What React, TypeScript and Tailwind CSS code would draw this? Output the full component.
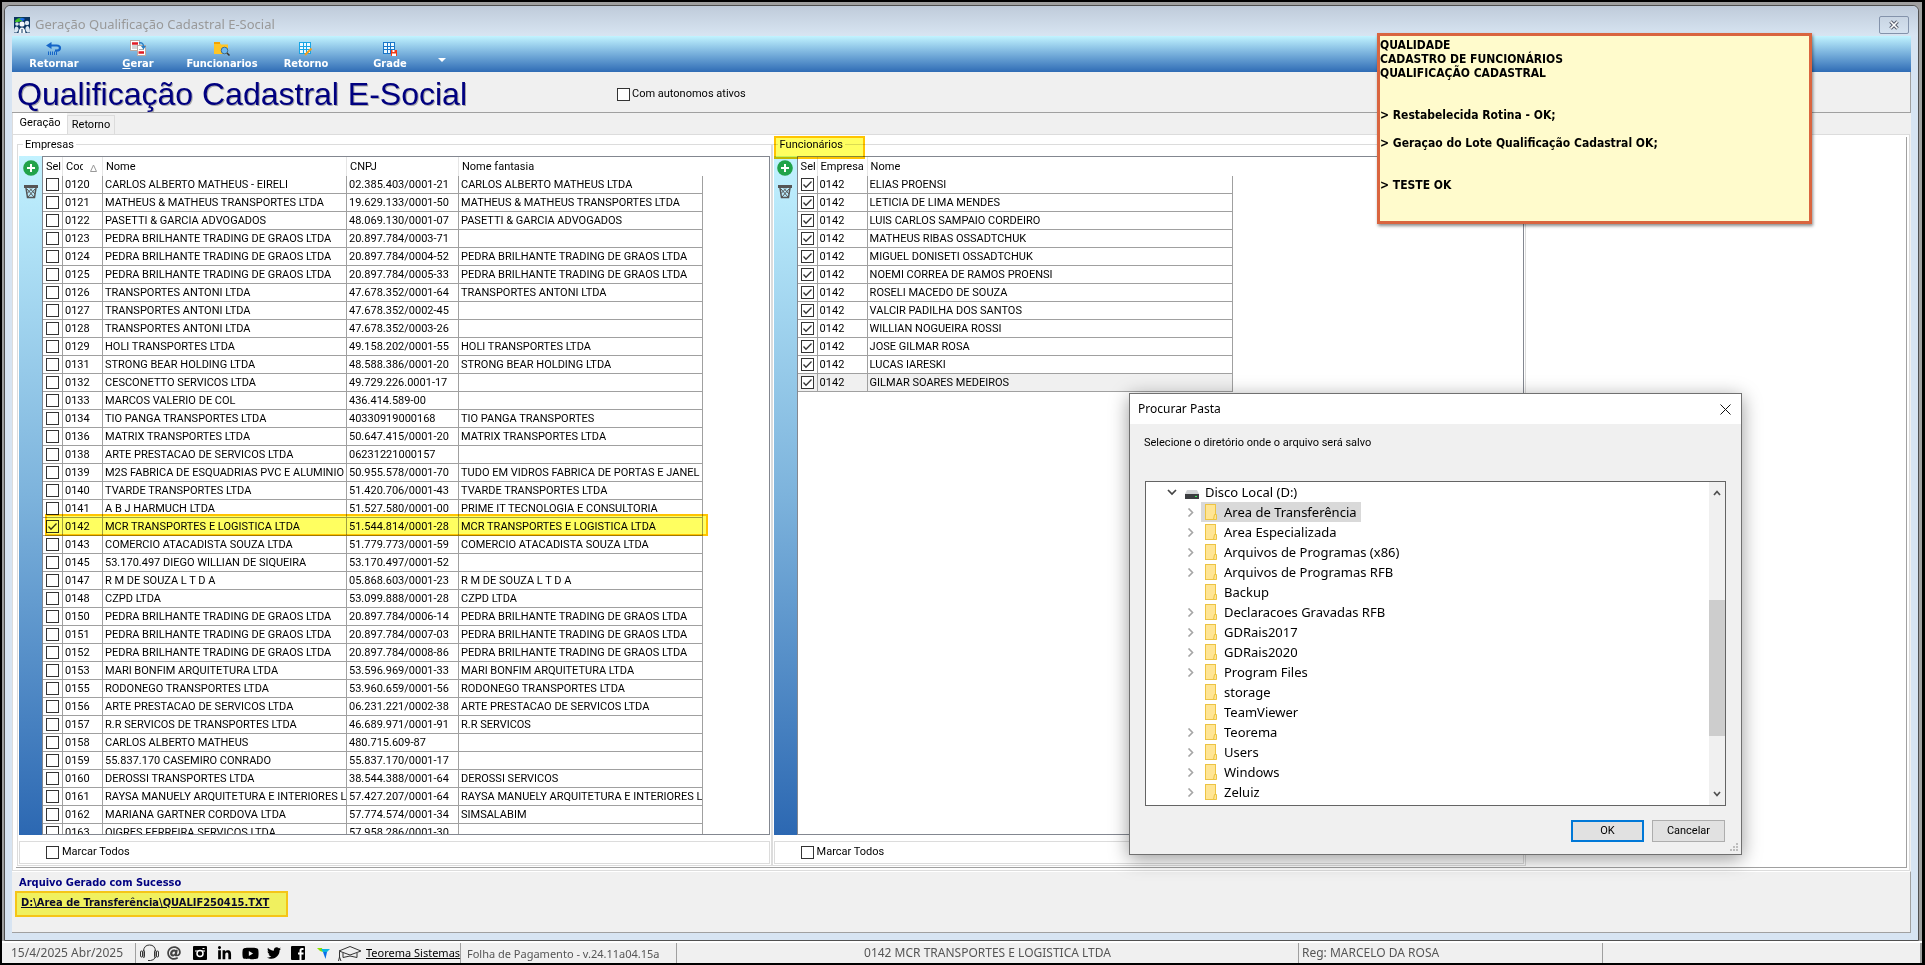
import React, { useState } from 'react';
import { FaAt, FaLinkedinIn, FaTwitter, FaYoutube } from 'react-icons/fa';

const empresas: [string, string, string, string][] = [
    ['0120', 'CARLOS ALBERTO MATHEUS - EIRELI', '02.385.403/0001-21', 'CARLOS ALBERTO MATHEUS LTDA'],
    ['0121', 'MATHEUS & MATHEUS TRANSPORTES LTDA', '19.629.133/0001-50', 'MATHEUS & MATHEUS TRANSPORTES LTDA'],
    ['0122', 'PASETTI & GARCIA ADVOGADOS', '48.069.130/0001-07', 'PASETTI & GARCIA ADVOGADOS'],
    ['0123', 'PEDRA BRILHANTE TRADING DE GRAOS LTDA', '20.897.784/0003-71', ''],
    ['0124', 'PEDRA BRILHANTE TRADING DE GRAOS LTDA', '20.897.784/0004-52', 'PEDRA BRILHANTE TRADING DE GRAOS LTDA'],
    ['0125', 'PEDRA BRILHANTE TRADING DE GRAOS LTDA', '20.897.784/0005-33', 'PEDRA BRILHANTE TRADING DE GRAOS LTDA'],
    ['0126', 'TRANSPORTES ANTONI LTDA', '47.678.352/0001-64', 'TRANSPORTES ANTONI LTDA'],
    ['0127', 'TRANSPORTES ANTONI LTDA', '47.678.352/0002-45', ''],
    ['0128', 'TRANSPORTES ANTONI LTDA', '47.678.352/0003-26', ''],
    ['0129', 'HOLI TRANSPORTES LTDA', '49.158.202/0001-55', 'HOLI TRANSPORTES LTDA'],
    ['0131', 'STRONG BEAR HOLDING LTDA', '48.588.386/0001-20', 'STRONG BEAR HOLDING LTDA'],
    ['0132', 'CESCONETTO SERVICOS LTDA', '49.729.226.0001-17', ''],
    ['0133', 'MARCOS VALERIO DE COL', '436.414.589-00', ''],
    ['0134', 'TIO PANGA TRANSPORTES LTDA', '40330919000168', 'TIO PANGA TRANSPORTES'],
    ['0136', 'MATRIX TRANSPORTES LTDA', '50.647.415/0001-20', 'MATRIX TRANSPORTES LTDA'],
    ['0138', 'ARTE PRESTACAO DE SERVICOS LTDA', '06231221000157', ''],
    ['0139', 'M2S FABRICA DE ESQUADRIAS PVC E ALUMINIO', '50.955.578/0001-70', 'TUDO EM VIDROS FABRICA DE PORTAS E JANEL'],
    ['0140', 'TVARDE TRANSPORTES LTDA', '51.420.706/0001-43', 'TVARDE TRANSPORTES LTDA'],
    ['0141', 'A B J HARMUCH LTDA', '51.527.580/0001-00', 'PRIME IT TECNOLOGIA E CONSULTORIA'],
    ['0142', 'MCR TRANSPORTES E LOGISTICA LTDA', '51.544.814/0001-28', 'MCR TRANSPORTES E LOGISTICA LTDA'],
    ['0143', 'COMERCIO ATACADISTA SOUZA LTDA', '51.779.773/0001-59', 'COMERCIO ATACADISTA SOUZA LTDA'],
    ['0145', '53.170.497 DIEGO WILLIAN DE SIQUEIRA', '53.170.497/0001-52', ''],
    ['0147', 'R M DE SOUZA L T D A', '05.868.603/0001-23', 'R M DE SOUZA L T D A'],
    ['0148', 'CZPD LTDA', '53.099.888/0001-28', 'CZPD LTDA'],
    ['0150', 'PEDRA BRILHANTE TRADING DE GRAOS LTDA', '20.897.784/0006-14', 'PEDRA BRILHANTE TRADING DE GRAOS LTDA'],
    ['0151', 'PEDRA BRILHANTE TRADING DE GRAOS LTDA', '20.897.784/0007-03', 'PEDRA BRILHANTE TRADING DE GRAOS LTDA'],
    ['0152', 'PEDRA BRILHANTE TRADING DE GRAOS LTDA', '20.897.784/0008-86', 'PEDRA BRILHANTE TRADING DE GRAOS LTDA'],
    ['0153', 'MARI BONFIM ARQUITETURA LTDA', '53.596.969/0001-33', 'MARI BONFIM ARQUITETURA LTDA'],
    ['0155', 'RODONEGO TRANSPORTES LTDA', '53.960.659/0001-56', 'RODONEGO TRANSPORTES LTDA'],
    ['0156', 'ARTE PRESTACAO DE SERVICOS LTDA', '06.231.221/0002-38', 'ARTE PRESTACAO DE SERVICOS LTDA'],
    ['0157', 'R.R SERVICOS DE TRANSPORTES LTDA', '46.689.971/0001-91', 'R.R SERVICOS'],
    ['0158', 'CARLOS ALBERTO MATHEUS', '480.715.609-87', ''],
    ['0159', '55.837.170 CASEMIRO CONRADO', '55.837.170/0001-17', ''],
    ['0160', 'DEROSSI TRANSPORTES LTDA', '38.544.388/0001-64', 'DEROSSI SERVICOS'],
    ['0161', 'RAYSA MANUELY ARQUITETURA E INTERIORES L', '57.427.207/0001-64', 'RAYSA MANUELY ARQUITETURA E INTERIORES L'],
    ['0162', 'MARIANA GARTNER CORDOVA LTDA', '57.774.574/0001-34', 'SIMSALABIM'],
    ['0163', 'OIGRES FERREIRA SERVICOS LTDA', '57.958.286/0001-30', ''],
];

const funcionarios = [
    'ELIAS PROENSI',
    'LETICIA DE LIMA MENDES',
    'LUIS CARLOS SAMPAIO CORDEIRO',
    'MATHEUS RIBAS OSSADTCHUK',
    'MIGUEL DONISETI OSSADTCHUK',
    'NOEMI CORREA DE RAMOS PROENSI',
    'ROSELI MACEDO DE SOUZA',
    'VALCIR PADILHA DOS SANTOS',
    'WILLIAN NOGUEIRA ROSSI',
    'JOSE GILMAR ROSA',
    'LUCAS IARESKI',
    'GILMAR SOARES MEDEIROS',
];

const pastas: [string, boolean][] = [
    ['Area de Transferência', true],
    ['Area Especializada', true],
    ['Arquivos de Programas (x86)', true],
    ['Arquivos de Programas RFB', true],
    ['Backup', false],
    ['Declaracoes Gravadas RFB', true],
    ['GDRais2017', true],
    ['GDRais2020', true],
    ['Program Files', true],
    ['storage', false],
    ['TeamViewer', false],
    ['Teorema', true],
    ['Users', true],
    ['Windows', true],
    ['Zeluiz', true],
];

const bold = 'font-["DejaVu_Sans_Condensed","DejaVu_Sans",sans-serif] font-bold';
const segoe = 'font-["Noto_Sans","Open_Sans",sans-serif]';
const cell = 'h-[18px] border-r border-b border-[#a0a0a0] p-0 pt-px pl-0.5 overflow-hidden whitespace-nowrap';
const head = 'h-[19px] border-r border-[#e5e5e5] p-0 pt-0.5 pl-[3px] text-left font-normal overflow-hidden whitespace-nowrap';

interface CheckProps {
    id?: string;
    label?: string;
    defaultChecked?: boolean;
}

const Check: React.FC<CheckProps> = ({ id, label, defaultChecked }) => {
    const [checked, setChecked] = useState(!!defaultChecked);
    return (
        <span className="relative block h-[13px] w-[13px] shrink-0">
            <input
                id={id}
                type="checkbox"
                aria-label={label}
                checked={checked}
                onChange={(e) => setChecked(e.target.checked)}
                className="block h-[13px] w-[13px] appearance-none border border-[#333] bg-white"
            />
            {checked && (
                <svg className="pointer-events-none absolute inset-0" width="13" height="13" viewBox="0 0 13 13">
                    <path d="M2.5 6.5 5 9.2 10.5 3.5" fill="none" stroke="#333" strokeWidth="1.3" />
                </svg>
            )}
        </span>
    );
};

const PersonIcon = () => (
    <svg width="16" height="16" viewBox="0 0 16 16">
        <rect width="16" height="16" fill="#0b3560" />
        <path d="M1 4Q4 0 9 1L8 4 4 5 1 5Z" fill="#3fc022" />
        <path d="M5 2Q8 0 11 2L9 4Z" fill="#1b6df0" />
        <circle cx="3" cy="7" r="1.800" fill="#dce8f2" />
        <circle cx="13" cy="6" r="2.200" fill="#dce8f2" />
        <circle cx="8" cy="7" r="2.600" fill="#f4f8fb" />
        <path d="M0 15.500Q0 10 2.500 9.500Q5 10 4.500 13L3 15.500ZM16 15.500Q16 9.500 13.500 9Q11 9.500 11.500 13L13 15.500Z" fill="#dce8f2" />
        <path d="M4.500 16Q5 10.500 8 10.500T11.500 16Z" fill="#f4f8fb" />
        <path d="M8 12V16" stroke="#0b3560" />
    </svg>
);

const ReturnIcon = () => (
    <svg width="16" height="14" viewBox="0 0 16 14">
        <path d="M4 3.500H10.500Q14 3.500 14 6T10.500 8.700H9" fill="none" stroke="#1565c8" strokeWidth="2.200" />
        <path d="M5.500 0V7L0 3.500Z" fill="#1565c8" />
        <path d="M2.500 9.500V13M4.500 9.500V13M6.500 9.500V13M8.500 9.500V13M10.500 9.500V13" stroke="#1565c8" />
    </svg>
);

const GenerateIcon = () => (
    <svg width="17" height="16" viewBox="0 0 17 16">
        <rect x=".5" y=".5" width="9" height="10" fill="#fff" stroke="#b9a9a0" />
        <rect x="7.500" y="5.500" width="8" height="10" fill="#fff" stroke="#b9a9a0" />
        <path d="M2 3.500H8M8.500 12.500H14" stroke="#e01b24" strokeWidth="2.500" />
        <path d="M2 6H8M2 8H8M9 9.500H14" stroke="#aaa" />
        <path d="M9 3Q13 2 13.500 6" fill="none" stroke="#2b7ec4" strokeWidth="1.500" />
        <path d="M11 6H16L13.500 9.500Z" fill="#2b7ec4" />
    </svg>
);

const FolderSearchIcon = () => (
    <svg width="16" height="14" viewBox="0 0 16 14">
        <path d="M0 1H6L7 2.500H14V12H0Z" fill="#ffc524" />
        <path d="M0 0H6V2H0Z" fill="#f5a300" />
        <circle cx="10.500" cy="8.500" r="3.300" fill="#6db8f2" stroke="#3c6b93" />
        <path d="M13 11 15.500 13.500" stroke="#333" strokeWidth="1.500" />
    </svg>
);

const GridIcon: React.FC<{ kind: 'edit' | 'save' }> = ({ kind }) => (
    <svg width="15" height="14" viewBox="0 0 15 14">
        <rect width="12" height="12" fill={kind === 'edit' ? '#17a5e5' : '#1976c9'} />
        <path d="M1 1h3v3H1zM5 1h2v3H5zM8 1h3v3H8zM1 5h3v2H1zM5 5h2v2H5zM8 5h3v2H8zM1 8h3v3H1zM5 8h2v3H5zM8 8h3v3H8z" fill="#eefaff" />
        {kind === 'edit' ? (
            <path d="M6 13 12.500 6.500" stroke="#f59e1b" strokeWidth="2" />
        ) : (
            <>
                <rect x="8" y="8" width="6" height="6" fill="#f03a17" />
                <path d="M9.500 8h2v2h-2zM9 11.500h4V14H9z" fill="#fff" />
            </>
        )}
    </svg>
);

const AddIcon = () => (
    <svg width="16" height="16" viewBox="0 0 16 16">
        <circle cx="8" cy="8" r="7.800" fill="#21a34a" />
        <path d="M8 4V12M4 8H12" stroke="#fff" strokeWidth="2" />
    </svg>
);

const TrashIcon = () => (
    <svg width="14" height="14" viewBox="0 0 14 14" fill="none" stroke="#555">
        <path d="M0 1.500H14" strokeWidth="3" />
        <path d="M2 3 3.500 12.500H10.500L12 3" strokeWidth="1.500" />
        <path d="M3 4 10 12M6 3.500 11 9M11 4 4 12M8 3.500 3 8.500" />
    </svg>
);

const FolderIcon = () => (
    <svg width="14" height="16" viewBox="0 0 14 16" className="shrink-0">
        <rect x=".5" y=".5" width="10" height="15" fill="#ffe594" stroke="#edc443" />
        <path d="M9.500 10.500H11.500V15.500H8.500Z" fill="#ffe594" stroke="#edc443" />
    </svg>
);

const DriveIcon = () => (
    <svg width="14" height="9" viewBox="0 0 14 9">
        <path d="M2 0H12L14 4H0Z" fill="#d2d4d6" />
        <rect y="4" width="14" height="5" fill="#3b3d40" />
        <rect x="10" y="6" width="2" height="1" fill="#3df05a" />
    </svg>
);

interface GridPanelProps {
    title: string;
    idPrefix: string;
    marked?: boolean;
    children: React.ReactNode;
}

const GridPanel: React.FC<GridPanelProps> = ({ title, idPrefix, marked, children }) => (
    <fieldset className="relative flex min-h-0 min-w-0 grow-[755] basis-0 flex-col border border-[#dcdcdc] p-px">
        <legend className="ml-1 px-0.5 leading-[15px]">{title}</legend>
        {marked && (
            <div className="absolute -top-4 left-px h-[23px] w-[91px] border-2 border-[#ffc400] bg-[#ffff60] mix-blend-multiply" />
        )}
        <div className="mt-[3px] flex min-h-0 flex-1">
            <div className="flex w-[23px] shrink-0 flex-col items-center gap-[9px] bg-linear-to-b from-[#c2f2ff] via-[#7db3dc] to-[#2c68b2] pt-1">
                <button type="button" aria-label="Adicionar">
                    <AddIcon />
                </button>
                <button type="button" aria-label="Excluir">
                    <TrashIcon />
                </button>
            </div>
            <div className="min-w-0 flex-1 overflow-hidden border border-[#838790]">{children}</div>
        </div>
        <div className="mt-1.5 flex h-[23px] items-center gap-[3px] border border-[#dcdcdc] pl-[26px]">
            <Check id={idPrefix + '-todos'} />
            <label htmlFor={idPrefix + '-todos'}>Marcar Todos</label>
        </div>
    </fieldset>
);

const ToolButton: React.FC<{ icon: React.ReactNode; children: React.ReactNode }> = ({ icon, children }) => (
    <button type="button" className={`flex w-[84px] flex-col items-center pt-0.5 text-white ${bold}`}>
        <span className="flex h-[18px] items-end">{icon}</span>
        <span className="leading-4">{children}</span>
    </button>
);

const StatusIcons = () => (
    <div className="flex items-center gap-2 pl-1 text-black">
        <svg width="19" height="18" viewBox="0 0 19 18" fill="none" stroke="#333">
            <path d="M3.500 7Q4 1 9.500 1T15.500 7M15.500 13Q14 16.500 10.500 16.500H8" />
            <rect x=".5" y="7" width="2" height="6" rx="1" />
            <rect x="3" y="6.500" width="1.500" height="7" rx=".7" />
            <rect x="16.500" y="7" width="2" height="6" rx="1" />
            <rect x="14.500" y="6.500" width="1.500" height="7" rx=".7" />
        </svg>
        <FaAt size={14} color="#444" />
        <svg width="14" height="14" viewBox="0 0 14 14" className="ml-1">
            <rect width="14" height="14" rx="1" />
            <path d="M2 5H12M9.500 2.500H11.500" stroke="#fff" strokeWidth="1.200" />
            <circle cx="7" cy="7.500" r="3" stroke="#fff" strokeWidth="1.500" />
        </svg>
        <FaLinkedinIn size={15} className="ml-0.5" />
        <FaYoutube size={17} className="ml-0.5" />
        <FaTwitter size={14} />
        <svg width="14" height="14" viewBox="0 0 14 14" className="ml-0.5">
            <rect width="14" height="14" rx="1" />
            <path d="M12.500 3H11Q9.500 3 9.500 4.800V14M7 7.500H12.500" fill="none" stroke="#fff" strokeWidth="2" />
        </svg>
        <svg width="13" height="11" viewBox="0 0 13 11" className="ml-1">
            <path d="M0 0H5L6 4 3 3Z" fill="#8be000" />
            <path d="M4 1H13L10 4H6Z" fill="#08b5e0" />
            <path d="M6 4H10L8.500 11Z" fill="#0a6fe8" />
        </svg>
        <svg width="24" height="17" viewBox="0 0 24 17" fill="none" stroke="#333">
            <path d="M12 1.500 23 6 12 10 1 6ZM5 8V12.500Q12 9.500 19 12.500V8M1.500 6.500V12M1.500 12 .5 16M1.500 12 3 16" />
        </svg>
    </div>
);

const FolderDialog = () => (
    <div
        role="dialog"
        aria-label="Procurar Pasta"
        className="absolute top-[393px] left-[1129px] w-[613px] border border-[#707070] bg-[#f0f0f0] shadow-[0_4px_18px_rgba(0,0,0,0.4)]"
    >
        <div className="flex h-[30px] items-center justify-between bg-white pr-2.5 pl-2">
            <span className={`text-[12px] ${segoe}`}>Procurar Pasta</span>
            <button type="button" aria-label="Fechar">
                <svg width="11" height="11" viewBox="0 0 11 11" stroke="#111">
                    <path d="M.5 .5 10.500 10.500M10.500 .5 .5 10.500" />
                </svg>
            </button>
        </div>
        <p className="px-3.5 pt-[11px] leading-4">Selecione o diretório onde o arquivo será salvo</p>
        <div className="mx-[15px] mt-[30px] flex border border-[#646464] bg-white">
            <ul className={`flex-1 pb-[3px] text-[13px] leading-5 ${segoe}`}>
                <li className="flex h-5 items-center pl-[21px]">
                    <svg width="10" height="7" viewBox="0 0 10 7">
                        <path d="M1 1 5 5 9 1" fill="none" stroke="#444" strokeWidth="1.700" />
                    </svg>
                    <span className="w-5 pt-1 pl-2">
                        <DriveIcon />
                    </span>
                    <span className="pl-2">Disco Local (D:)</span>
                </li>
                {pastas.map(([nome, filhos], i) => (
                    <li key={nome} className="flex h-5 items-center pl-[41px]">
                        <span className="w-[14px]">
                            {filhos && (
                                <svg width="7" height="9" viewBox="0 0 7 9">
                                    <path d="M1.500 .5 5.500 4.500 1.500 8.500" fill="none" stroke="#a6a6a6" strokeWidth="1.600" />
                                </svg>
                            )}
                        </span>
                        <span className={i === 0 ? 'flex h-5 items-center gap-[5px] bg-[#d9d9d9] px-1' : 'flex h-5 items-center gap-[5px] px-1'}>
                            <FolderIcon />
                            {nome}
                        </span>
                    </li>
                ))}
            </ul>
            <div className="flex w-4 flex-col items-center justify-between bg-[#f0f0f0] py-2">
                <svg width="8" height="6" viewBox="0 0 8 6">
                    <path d="M1 5 4 1.500 7 5" fill="none" stroke="#505050" strokeWidth="1.700" />
                </svg>
                <div className="mt-12 h-[136px] w-4 bg-[#cdcdcd]" />
                <svg width="8" height="6" viewBox="0 0 8 6">
                    <path d="M1 1 4 4.500 7 1" fill="none" stroke="#505050" strokeWidth="1.700" />
                </svg>
            </div>
        </div>
        <div className="flex justify-end gap-2 pt-3.5 pr-4">
            <button type="button" className="h-[22px] w-[73px] border-2 border-[#0078d7] bg-[#e1e1e1]">
                OK
            </button>
            <button type="button" className="h-[22px] w-[73px] border border-[#adadad] bg-[#e1e1e1]">
                Cancelar
            </button>
        </div>
        <div className="flex h-3 items-end justify-end pr-0.5 pb-0.5">
            <svg width="9" height="9" viewBox="0 0 9 9" fill="#bdbdbd">
                <path d="M6 0h2v2H6zM3 3h2v2H3zM6 3h2v2H6zM0 6h2v2H0zM3 6h2v2H3zM6 6h2v2H6z" />
            </svg>
        </div>
    </div>
);

export default function App() {
    return (
        <div className='relative flex h-screen flex-col overflow-hidden bg-black pt-0.5 pr-[3px] pb-0.5 pl-0.5 font-["Roboto","Noto_Sans",sans-serif] text-[11px] text-black'>
            <div className="flex min-h-0 flex-1 flex-col bg-[#a0a0a0] pt-[3px] pr-[3px] pl-0.5">
                <div className="flex min-h-0 flex-1 flex-col rounded-t-md border border-[#505050] bg-[#d7e4f2] px-[7px] pb-[7px]">
                    <div className="-mx-[7px] flex h-[30px] shrink-0 items-center gap-[5px] rounded-t-md bg-linear-to-b from-[#bfcbda] to-[#d8e5f2] pt-2 pr-[9px] pl-[9px]">
                        <PersonIcon />
                        <h1 className={`flex-1 text-[13px] text-[#999] ${segoe}`}>Geração Qualificação Cadastral E-Social</h1>
                        <button type="button" aria-label="Fechar janela" className="flex h-[18px] w-[30px] items-center justify-center rounded-xs border border-[#8493ab]">
                            <svg width="12" height="10" viewBox="0 0 12 10">
                                <path d="M2.500 1.500 9.500 8.500M9.500 1.500 2.500 8.500" stroke="#555a6b" strokeWidth="3.600" />
                                <path d="M2.500 1.500 9.500 8.500M9.500 1.500 2.500 8.500" stroke="#fff" strokeWidth="1.600" />
                            </svg>
                        </button>
                    </div>

                    <div className="flex h-9 shrink-0 bg-linear-to-b from-[#c2f4ff] to-[#2f6cb5]">
                        <ToolButton icon={<ReturnIcon />}>Retornar</ToolButton>
                        <ToolButton icon={<GenerateIcon />}>
                            <u>G</u>erar
                        </ToolButton>
                        <ToolButton icon={<FolderSearchIcon />}>Funcionarios</ToolButton>
                        <ToolButton icon={<GridIcon kind="edit" />}>Retorno</ToolButton>
                        <ToolButton icon={<GridIcon kind="save" />}>Grade</ToolButton>
                        <button type="button" aria-label="Mais" className="flex w-5 items-center justify-center pt-3">
                            <svg width="8" height="4" viewBox="0 0 8 4">
                                <path d="M0 0H8L4 4Z" fill="#fff" />
                            </svg>
                        </button>
                    </div>

                    <div className="flex h-[41px] shrink-0 items-center border-r border-b border-[#a0a0a0] bg-[#f0f0f0] pt-1 pl-[5px]">
                        <h2 className='w-[600px] font-["Liberation_Sans",Arial,sans-serif] text-[32px] leading-9 whitespace-nowrap text-[#000080] [text-shadow:1px_1px_0_#a8a8a8]'>
                            Qualificação Cadastral E-Social
                        </h2>
                        <div className="flex items-center gap-0.5">
                            <Check id="autonomos" />
                            <label htmlFor="autonomos">Com autonomos ativos</label>
                        </div>
                    </div>

                    <div className="flex min-h-0 flex-1 flex-col bg-[#f0f0f0]">
                        <div role="tablist" className="flex h-[21px] shrink-0 items-end">
                            <button type="button" role="tab" aria-selected="true" className="h-[21px] w-[55px] border-l border-[#dcdcdc] bg-white">
                                Geração
                            </button>
                            <button type="button" role="tab" aria-selected="false" className="h-[19px] w-12 border border-b-0 border-[#dcdcdc]">
                                Retorno
                            </button>
                        </div>
                        <div className="mr-px flex min-h-0 flex-1 flex-col border border-[#dcdcdc] bg-white pt-0.5 pr-0.5 pb-0.5 pl-[3px]">
                            <div className="flex min-h-0 flex-1 border-r border-b border-[#a0a0a0] pb-px pl-px">
                                <GridPanel title="Empresas" idPrefix="empresas">
                                    <table className="w-[660px] table-fixed border-separate border-spacing-0">
                                        <colgroup>
                                            <col className="w-5" />
                                            <col className="w-10" />
                                            <col className="w-[244px]" />
                                            <col className="w-28" />
                                            <col className="w-[244px]" />
                                        </colgroup>
                                        <thead>
                                            <tr>
                                                <th className={head}>Sel</th>
                                                <th className={head}>
                                                    <span className="flex items-center gap-[7px]">
                                                        <span className="w-[17px] overflow-hidden">Cod</span>
                                                        <svg width="7" height="8" viewBox="0 0 7 8">
                                                            <path d="M3.500 1 6.500 7.500H.5Z" fill="none" stroke="#999" />
                                                        </svg>
                                                    </span>
                                                </th>
                                                <th className={head}>Nome</th>
                                                <th className={head}>CNPJ</th>
                                                <th className="h-[19px] p-0 pt-0.5 pl-[3px] text-left font-normal">Nome fantasia</th>
                                            </tr>
                                        </thead>
                                        <tbody>
                                            {empresas.map(([cod, nome, cnpj, fantasia]) => (
                                                <tr key={cod} className="relative leading-4">
                                                    <td className="h-[18px] border-r border-b border-[#a0a0a0] p-0 pl-[3px]">
                                                        <Check label={'Selecionar ' + cod} defaultChecked={cod === '0142'} />
                                                        {cod === '0142' && (
                                                            <div className="pointer-events-none absolute -top-1 left-0.5 h-[22px] w-[663px] border-2 border-[#ffc400] bg-[#ffff60] mix-blend-multiply" />
                                                        )}
                                                    </td>
                                                    <td className={cell}>{cod}</td>
                                                    <td className={cell}>{nome}</td>
                                                    <td className={cell}>{cnpj}</td>
                                                    <td className={cell}>{fantasia}</td>
                                                </tr>
                                            ))}
                                        </tbody>
                                    </table>
                                </GridPanel>
                                <GridPanel title="Funcionários" idPrefix="funcionarios" marked>
                                    <table className="w-[435px] table-fixed border-separate border-spacing-0">
                                        <colgroup>
                                            <col className="w-5" />
                                            <col className="w-[50px]" />
                                            <col className="w-[365px]" />
                                        </colgroup>
                                        <thead>
                                            <tr>
                                                <th className={head}>Sel</th>
                                                <th className={head}>Empresa</th>
                                                <th className="h-[19px] p-0 pt-0.5 pl-[3px] text-left font-normal">Nome</th>
                                            </tr>
                                        </thead>
                                        <tbody>
                                            {funcionarios.map((nome, i) => (
                                                <tr key={nome} className={i === funcionarios.length - 1 ? 'bg-[#f0f0f0] leading-4' : 'leading-4'}>
                                                    <td className="h-[18px] border-r border-b border-[#a0a0a0] p-0 pl-[3px]">
                                                        <Check label={'Selecionar ' + nome} defaultChecked />
                                                    </td>
                                                    <td className={cell}>0142</td>
                                                    <td className={cell}>{nome}</td>
                                                </tr>
                                            ))}
                                        </tbody>
                                    </table>
                                </GridPanel>
                                <div className="grow-[382] basis-0" />
                            </div>
                        </div>
                    </div>

                    <div className="flex h-[62px] shrink-0 flex-col items-start border-t border-r border-b border-t-white border-r-[#a0a0a0] border-b-[#a0a0a0] bg-[#f0f0f0] pt-[3px] pl-[3px]">
                        <p className={`pl-1 leading-4 text-[#000080] ${bold}`}>Arquivo Gerado com Sucesso</p>
                        <a
                            href="#arquivo"
                            className={`h-[26px] w-[273px] border-2 border-[#f5c518] bg-[#f0f05f] pl-1 leading-5 text-[#0a0a28] underline ${bold}`}
                        >
                            D:\Area de Transferência\QUALIF250415.TXT
                        </a>
                    </div>
                </div>
            </div>

            <footer className={`flex h-[22px] shrink-0 items-stretch border-t-2 border-white bg-[#f0f0f0] text-[12px] leading-5 text-[#555] ${segoe}`}>
                <div className="w-[134px] border-r border-[#a0a0a0] pl-[9px]">15/4/2025 Abr/2025</div>
                <div className="flex w-[325px] items-center gap-1 border-r border-[#a0a0a0] whitespace-nowrap">
                    <StatusIcons />
                    <a href="#teorema" className="text-[11px] text-black underline">
                        Teorema Sistemas
                    </a>
                </div>
                <div className="w-[216px] border-r border-[#a0a0a0] pl-1.5 text-[11px] leading-[22px]">Folha de Pagamento - v.24.11a04.15a</div>
                <div className="grow-[624] basis-0 border-r border-[#a0a0a0] text-center">0142 MCR TRANSPORTES E LOGISTICA LTDA</div>
                <div className="grow-[301] basis-0 border-r border-[#a0a0a0] pl-[3px]">Reg: MARCELO DA ROSA</div>
                <div className="grow-[319] basis-0 border-r-2 border-[#a0a0a0]" />
            </footer>

            <div className={`absolute top-[33px] left-[1377px] h-[191px] w-[435px] border-3 border-[#d9653f] bg-[#fffbcc] pt-0.5 text-[12px] leading-[14px] whitespace-pre-line shadow-[1px_2px_3px_rgba(0,0,0,0.45)] ${bold}`}>
                {'QUALIDADE\nCADASTRO DE FUNCIONÁRIOS\nQUALIFICAÇÃO CADASTRAL\n\n\n> Restabelecida Rotina - OK;\n\n> Geraçao do Lote Qualificação Cadastral OK;\n\n\n> TESTE OK'}
            </div>

            <FolderDialog />
        </div>
    );
}
